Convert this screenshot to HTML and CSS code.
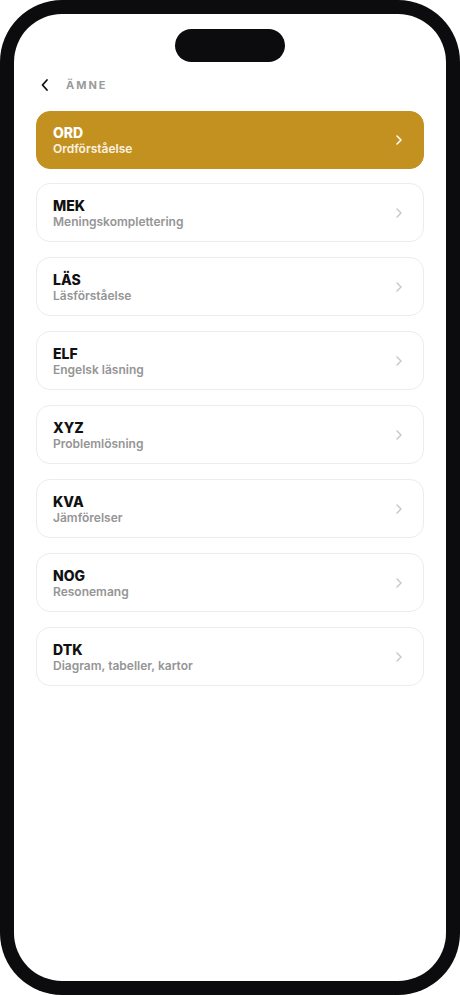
FILE: index.html
```html
<!DOCTYPE html>
<html lang="sv">
<head>
<meta charset="utf-8">
<title>Ämne</title>
<link rel="stylesheet" href="styles.css">
</head>
<body>
<div class="phone">
  <div class="screen">
    <div class="island"></div>
    <div class="header">
      <svg class="back" width="10" height="14" viewBox="0 0 10 14"><path d="M7 2 L2.5 7 L7 12" fill="none" stroke="#111" stroke-width="1.8" stroke-linecap="round" stroke-linejoin="round"/></svg>
      <span class="title">ÄMNE</span>
    </div>
    <div class="list">
      <div class="card active">
        <div class="text"><div class="code">ORD</div><div class="name">Ordförståelse</div></div>
        <svg class="chev" width="8" height="12" viewBox="0 0 8 12"><path d="M2 2 L6 6 L2 10" fill="none" stroke-width="1.6" stroke-linecap="round" stroke-linejoin="round"/></svg>
      </div>
      <div class="card">
        <div class="text"><div class="code">MEK</div><div class="name">Meningskomplettering</div></div>
        <svg class="chev" width="8" height="12" viewBox="0 0 8 12"><path d="M2 2 L6 6 L2 10" fill="none" stroke-width="1.4" stroke-linecap="round" stroke-linejoin="round"/></svg>
      </div>
      <div class="card">
        <div class="text"><div class="code">LÄS</div><div class="name">Läsförståelse</div></div>
        <svg class="chev" width="8" height="12" viewBox="0 0 8 12"><path d="M2 2 L6 6 L2 10" fill="none" stroke-width="1.4" stroke-linecap="round" stroke-linejoin="round"/></svg>
      </div>
      <div class="card">
        <div class="text"><div class="code">ELF</div><div class="name">Engelsk läsning</div></div>
        <svg class="chev" width="8" height="12" viewBox="0 0 8 12"><path d="M2 2 L6 6 L2 10" fill="none" stroke-width="1.4" stroke-linecap="round" stroke-linejoin="round"/></svg>
      </div>
      <div class="card">
        <div class="text"><div class="code">XYZ</div><div class="name">Problemlösning</div></div>
        <svg class="chev" width="8" height="12" viewBox="0 0 8 12"><path d="M2 2 L6 6 L2 10" fill="none" stroke-width="1.4" stroke-linecap="round" stroke-linejoin="round"/></svg>
      </div>
      <div class="card">
        <div class="text"><div class="code">KVA</div><div class="name">Jämförelser</div></div>
        <svg class="chev" width="8" height="12" viewBox="0 0 8 12"><path d="M2 2 L6 6 L2 10" fill="none" stroke-width="1.4" stroke-linecap="round" stroke-linejoin="round"/></svg>
      </div>
      <div class="card">
        <div class="text"><div class="code">NOG</div><div class="name">Resonemang</div></div>
        <svg class="chev" width="8" height="12" viewBox="0 0 8 12"><path d="M2 2 L6 6 L2 10" fill="none" stroke-width="1.4" stroke-linecap="round" stroke-linejoin="round"/></svg>
      </div>
      <div class="card">
        <div class="text"><div class="code">DTK</div><div class="name">Diagram, tabeller, kartor</div></div>
        <svg class="chev" width="8" height="12" viewBox="0 0 8 12"><path d="M2 2 L6 6 L2 10" fill="none" stroke-width="1.4" stroke-linecap="round" stroke-linejoin="round"/></svg>
      </div>
    </div>
  </div>
</div>
</body>
</html>
```

FILE: styles.css
```css
* { box-sizing: border-box; }
html, body {
  margin: 0;
  padding: 0;
  background: #ffffff;
}
body {
  font-family: Inter, "Noto Sans", "DejaVu Sans", sans-serif;
  width: 460px;
  height: 995px;
  overflow: hidden;
}
.phone {
  width: 460px;
  height: 995px;
  background: #0c0c0e;
  border-radius: 62px;
  padding: 14px;
}
.screen {
  position: relative;
  width: 432px;
  height: 967px;
  background: #ffffff;
  border-radius: 48px;
  padding: 60px 22px 0;
}
.island {
  position: absolute;
  top: 15px;
  left: 161px;
  width: 110px;
  height: 33px;
  border-radius: 17px;
  background: #0c0c0e;
}
.header {
  height: 22px;
  display: flex;
  align-items: center;
  padding-left: 4px;
}
.back {
  display: block;
}
.title {
  margin-left: 16px;
  font-size: 11px;
  font-weight: 700;
  letter-spacing: 2px;
  color: #9b9b9b;
}
.list {
  margin-top: 15px;
  display: flex;
  flex-direction: column;
  gap: 15px;
}
.card {
  height: 59px;
  border: 1px solid #ececec;
  border-radius: 14px;
  display: flex;
  align-items: center;
  justify-content: space-between;
  padding: 0 20px 0 16px;
  background: #ffffff;
}
.card.active {
  background: #c39120;
  border-color: #c39120;
  height: 58px;
  margin-bottom: -1px;
}
.code {
  font-size: 14px;
  line-height: 17px;
  font-weight: 800;
  color: #111111;
}
.name {
  font-size: 12px;
  line-height: 15px;
  font-weight: 600;
  color: #959595;
}
.active .code {
  color: #ffffff;
}
.active .name {
  color: #fbf3e2;
}
.chev path {
  stroke: #c6c6c6;
}
.active .chev path {
  stroke: #ffffff;
}
```
